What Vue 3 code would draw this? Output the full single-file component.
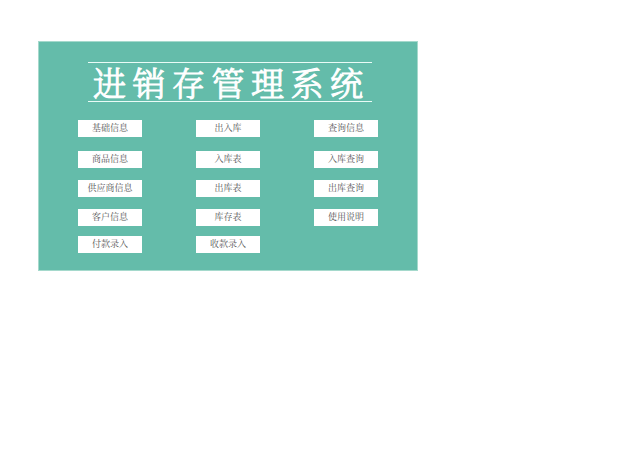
<script setup>
const rows = [
  ['基础信息', '出入库', '查询信息'],
  ['商品信息', '入库表', '入库查询'],
  ['供应商信息', '出库表', '出库查询'],
  ['客户信息', '库存表', '使用说明'],
  ['付款录入', '收款录入'],
]
</script>

<template>
  <main class="page">
    <section class="panel">
      <h1 class="title">进销存管理系统</h1>
      <nav class="menu">
        <div v-for="(row, i) in rows" :key="i" class="row">
          <button v-for="label in row" :key="label" type="button" class="item">{{ label }}</button>
        </div>
      </nav>
    </section>
  </main>
</template>

<style>
body {
  margin: 0;
  background: #fff;
}
</style>

<style scoped>
.page {
  padding: 41px 38px;
  font-family: "Noto Serif CJK SC", "Source Han Serif SC", "SimSun", "Noto Sans CJK SC", serif;
}

.panel {
  box-sizing: border-box;
  max-width: 380px;
  padding: 20px 39px 17px;
  border: 1px solid #a5d9cc;
  background: #64bcaa;
}

.title {
  margin: 0 6px 0 10px;
  padding: 0 9px 0 5px;
  border: solid #e9fbf6;
  border-width: 1px 0;
  color: #fff;
  font-size: 33px;
  font-weight: 300;
  line-height: 38px;
  text-align: justify;
  text-align-last: justify;
  -webkit-text-stroke: 1px #fff;
}

.menu {
  display: flex;
  flex-direction: column;
  gap: 12px;
  margin-top: 18px;
}

.row {
  display: grid;
  grid-template-columns: repeat(3, 1fr);
  column-gap: 54px;
}

.row:first-child {
  margin-bottom: 2px;
}

.row:last-child {
  margin-top: -2px;
}

.item {
  min-width: 0;
  height: 17px;
  padding: 0 0 2px;
  border: 0;
  background: #fff;
  color: #555;
  font-family: inherit;
  font-size: 9px;
  font-weight: 400;
  line-height: 14px;
  white-space: nowrap;
  cursor: pointer;
}
</style>
